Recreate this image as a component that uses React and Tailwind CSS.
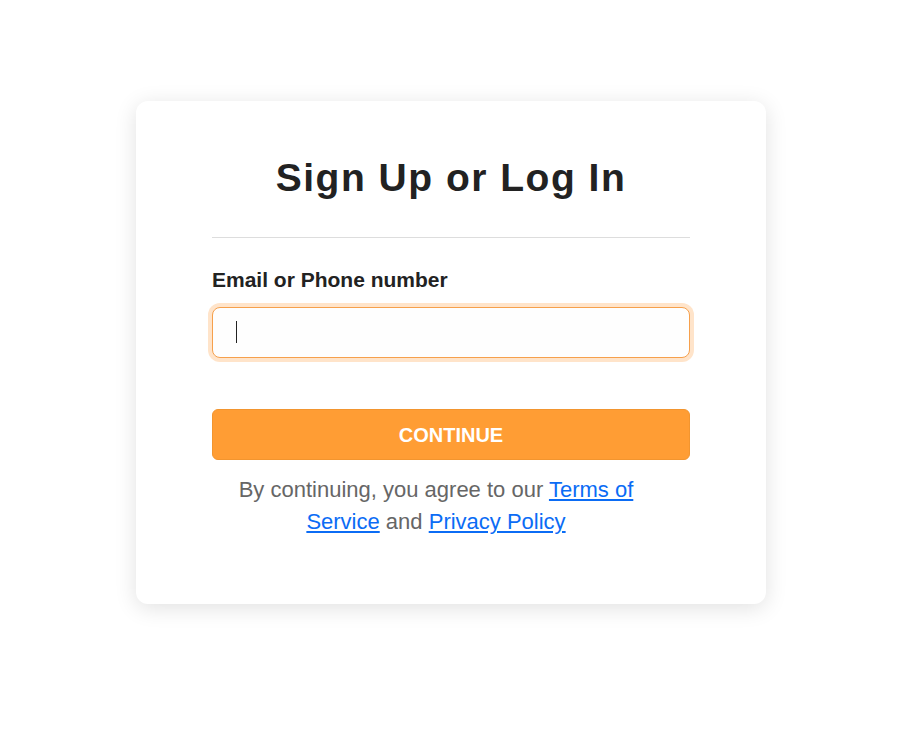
export default function App() {
  return (
    <div className="min-h-screen bg-white pt-[101px] font-['Liberation_Sans',Arial,sans-serif]">
      <div className="mx-auto w-[630px] rounded-xl bg-white px-[76px] pt-[54px] pb-[66px] shadow-[0_4px_22px_rgba(0,0,0,0.12)] translate-x-[1px]">
        <h1 className="text-center text-[39px] leading-[46px] font-bold tracking-[1.5px] text-[#222]">
          Sign Up or Log In
        </h1>
        <div className="mt-[36px] h-px bg-[#dddddd]" />

        <label
          htmlFor="login"
          className="mt-[30px] block text-[21px] leading-[24px] font-bold text-[#222]"
        >
          Email or Phone number
        </label>
        <div className="relative mt-[15px]">
          <input
            id="login"
            type="text"
            className="block h-[51px] w-full rounded-lg border border-[#f6a04c] bg-[#fefefe] pl-[23px] text-[20px] text-[#222] caret-transparent shadow-[0_0_0_4px_#ffe4ca] outline-none"
          />
          {/* caret of the focused field */}
          <span className="pointer-events-none absolute left-[24px] top-[14px] h-[22px] w-px bg-[#222]" />
        </div>

        <button
          type="button"
          className="mt-[51px] block h-[51px] w-full rounded-md border border-[#f2952f] bg-[#ff9d34] text-[20px] font-bold text-white"
        >
          CONTINUE
        </button>

        <p className="mt-[14px] pr-[30px] text-center text-[22px] leading-[32px] text-[#666]">
          By continuing, you agree to our{" "}
          <a href="#" className="text-[#0b6cf5] underline">
            Terms of Service
          </a>{" "}
          and{" "}
          <a href="#" className="text-[#0b6cf5] underline">
            Privacy Policy
          </a>
        </p>
      </div>
    </div>
  );
}
